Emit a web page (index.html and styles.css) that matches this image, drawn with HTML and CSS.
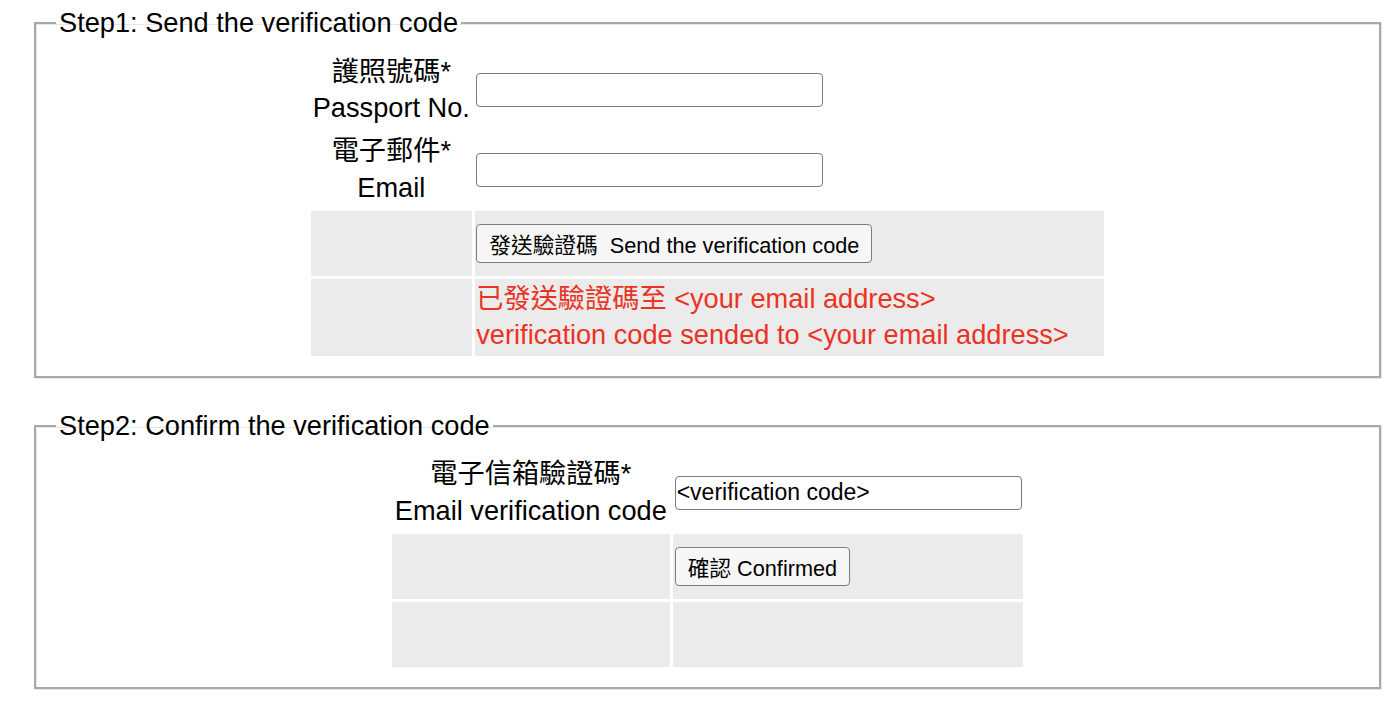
FILE: index.html
```html
<!DOCTYPE html>
<html lang="zh-Hant">
<head>
  <meta charset="UTF-8" />
  <meta name="viewport" content="width=device-width, initial-scale=1.0"/>
  <title>Email Verification</title>
  <link rel="stylesheet" href="styles.css">
</head>
<body>
  <!-- step 1: passport + email, send the code -->
  <fieldset class="step">
    <legend>Step1: Send the verification code</legend>
    <table class="form-table form-send">
      <tr>
        <td class="label">護照號碼*<br>Passport No.</td>
        <td class="field"><input type="text" class="text-input" name="passport"></td>
      </tr>
      <tr>
        <td class="label">電子郵件*<br>Email</td>
        <td class="field"><input type="text" class="text-input" name="email"></td>
      </tr>
      <tr class="action">
        <td></td>
        <td class="field"><button type="button" class="btn">發送驗證碼&nbsp; Send the verification code</button></td>
      </tr>
      <tr class="action msg-row">
        <td></td>
        <td class="field msg">已發送驗證碼至 &lt;your email address&gt;<br>verification code sended to &lt;your email address&gt;</td>
      </tr>
    </table>
  </fieldset>

  <!-- step 2: type the code back in -->
  <fieldset class="step">
    <legend>Step2: Confirm the verification code</legend>
    <table class="form-table form-confirm">
      <tr>
        <td class="label">電子信箱驗證碼*<br>Email verification code</td>
        <td class="field"><input type="text" class="text-input" name="code" value="<verification code>"></td>
      </tr>
      <tr class="action">
        <td></td>
        <td class="field"><button type="button" class="btn">確認 Confirmed</button></td>
      </tr>
      <tr class="action">
        <td></td>
        <td class="field"></td>
      </tr>
    </table>
  </fieldset>
</body>
</html>
```

FILE: styles.css
```css
html, body {
  margin: 0;
  padding: 0;
  background: #fff;
}

body {
  padding-top: 7px;
  font-family: "Liberation Sans", "Noto Sans CJK TC", sans-serif;
  font-size: 27.2px;
  color: #000;
}

.step {
  margin: 0 19px 32px 34px;
  padding: 10px 20px 17px;
  border: 2px solid #a8a8a8;
  box-shadow: inset 1px 1px 0 #e6e6e6, 1px 1px 0 #e6e6e6;
}

.step legend {
  padding: 0 3px;
  line-height: 32px;
}

.form-table {
  margin: 0 auto;
  border-collapse: separate;
  border-spacing: 3.4px;
}

.form-table td {
  padding: 1.7px;
  line-height: 36.6px;
  vertical-align: middle;
}

.form-table .label {
  text-align: center;
  white-space: nowrap;
}

.form-send .label {
  width: 156px;
}

.form-send .field {
  width: 626px;
}

.form-confirm .label {
  width: 275px;
}

.form-confirm .field {
  width: 347px;
}

.action {
  height: 65px;
}

.action td {
  background: #ebebeb;
}

.text-input {
  display: block;
  box-sizing: border-box;
  width: 347px;
  height: 34px;
  margin: 0;
  padding: 0 1px;
  border: 1px solid #7a7a7a;
  border-radius: 4px;
  font-family: "Liberation Sans", "Noto Sans CJK TC", sans-serif;
  font-size: 23px;
  color: #000;
  background: #fff;
}

.btn {
  display: block;
  box-sizing: border-box;
  height: 39px;
  margin: 0;
  padding: 0 12px;
  border: 1px solid #7d7d7d;
  border-radius: 4px;
  background: #f6f6f6;
  font-family: "Liberation Sans", "Noto Sans CJK TC", sans-serif;
  font-size: 21.7px;
  color: #000;
  white-space: nowrap;
}

.msg {
  color: #ea3323;
}
```
